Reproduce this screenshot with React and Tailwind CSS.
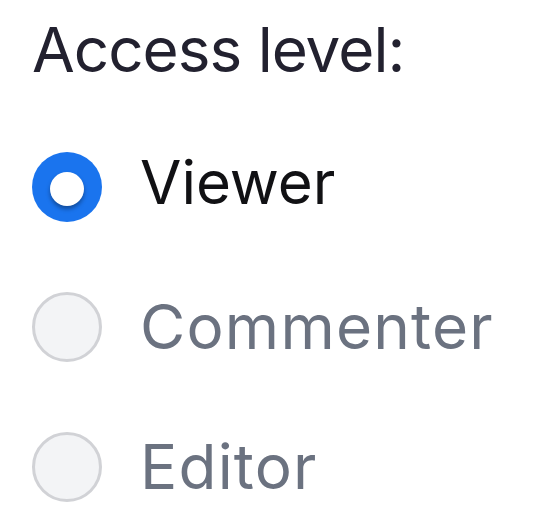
export default function App() {
  const options = [
    { label: "Viewer", selected: true },
    { label: "Commenter", selected: false },
    { label: "Editor", selected: false },
  ];
  return (
    <div className="w-[552px] h-[532px] bg-white pl-[32px] pt-[19px]" style={{ fontFamily: "Inter, 'Liberation Sans', sans-serif" }}>
      <div className="text-[62px] leading-none text-[#22212f] font-normal tracking-[-1px]">Access level:</div>
      <div className="mt-[36px] flex flex-col">
        {options.map((o) => (
          <div key={o.label} className="h-[140px] flex items-center gap-[38px]">
            {o.selected ? (
              <div className="w-[70px] h-[70px] rounded-full bg-[#1a74ee] flex items-center justify-center shrink-0">
                <div className="w-[34px] h-[34px] mt-[4px] rounded-full bg-white shadow-[0_3px_4px_rgba(0,0,0,0.35)]" />
              </div>
            ) : (
              <div className="w-[70px] h-[70px] rounded-full bg-[#f3f4f6] border-[3px] border-[#d1d2d6] shrink-0" />
            )}
            {o.selected ? (
              <span className="text-[60px] leading-none text-[#111114] mb-[10px]">{o.label}</span>
            ) : (
              <span className="text-[62px] leading-none text-[#6b7280] tracking-[1.2px]">{o.label}</span>
            )}
          </div>
        ))}
      </div>
    </div>
  );
}
